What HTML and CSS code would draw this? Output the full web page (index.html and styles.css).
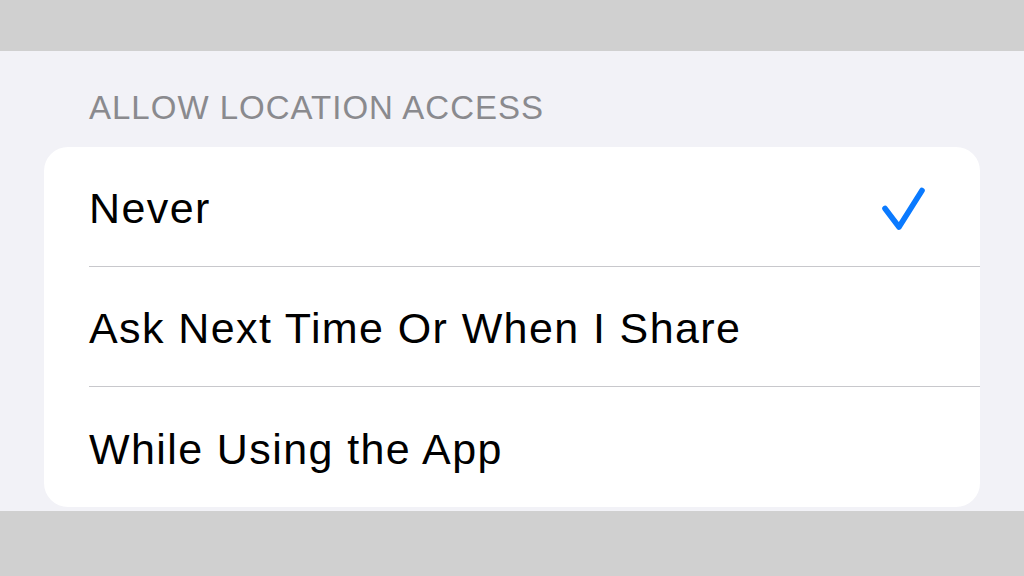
FILE: index.html
```html
<!DOCTYPE html>
<html>
<head>
<meta charset="utf-8">
<link rel="stylesheet" href="styles.css">
</head>
<body>
<div class="topbar"></div>
<main class="content">
  <div class="section-header">ALLOW LOCATION ACCESS</div>
  <div class="card">
    <div class="row">
      <span class="label">Never</span>
      <svg class="check" width="44" height="44" viewBox="0 0 44 44"><path d="M3 23.5 L17 42 L40 5.5" fill="none" stroke="#0a7aff" stroke-width="5.6" stroke-linecap="round" stroke-linejoin="round"/></svg>
    </div>
    <div class="row">
      <span class="label">Ask Next Time Or When I Share</span>
    </div>
    <div class="row">
      <span class="label">While Using the App</span>
    </div>
  </div>
</main>
<div class="bottombar"></div>
</body>
</html>
```
FILE: styles.css
```css
html, body {
  margin: 0;
  padding: 0;
  width: 1024px;
  height: 576px;
  overflow: hidden;
  background: #d0d0d0;
  font-family: "Liberation Sans", Arial, sans-serif;
}
.topbar {
  height: 51px;
  background: #d0d0d0;
}
.content {
  background: #f2f2f7;
  height: 460px;
  padding: 0 44px 0 44px;
  box-sizing: border-box;
  display: flex;
  flex-direction: column;
}
.section-header {
  color: #8a8a8e;
  font-size: 33px;
  line-height: 38px;
  padding: 38px 0 0 45px;
  height: 96px;
  box-sizing: border-box;
  letter-spacing: 1px;
}
.card {
  background: #ffffff;
  border-radius: 24px;
  overflow: hidden;
}
.row {
  height: 120px;
  margin-left: 45px;
  display: flex;
  align-items: center;
  justify-content: space-between;
  padding-right: 54px;
  border-bottom: 1px solid #c8c8cc;
  box-sizing: border-box;
}
.row:last-child {
  border-bottom: none;
}
.label {
  font-size: 43px;
  color: #000;
  letter-spacing: 1.4px;
  padding-top: 4px;
}
.check {
  display: block;
  overflow: visible;
}
.bottombar {
  height: 65px;
  background: #d0d0d0;
}
```
